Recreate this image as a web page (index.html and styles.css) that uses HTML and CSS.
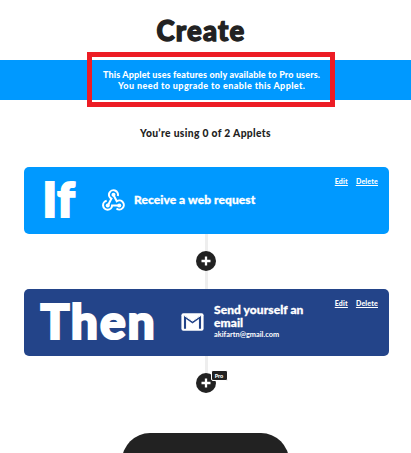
FILE: index.html
```html
<!DOCTYPE html>
<html lang="en">
<head>
<meta charset="utf-8">
<title>Create</title>
<link rel="stylesheet" href="styles.css">
</head>
<body>
<main class="page">
  <h1 class="title">Create</h1>
  <section class="banner">
    <p class="banner-one">This Applet uses features only available to Pro users.</p>
    <p class="banner-two">You need to upgrade to enable this Applet.</p>
    <div class="highlight"></div>
  </section>
  <p class="usage">You’re using 0 of 2 Applets</p>
  <section class="card card-if">
    <div class="word word-if">If</div>
    <svg class="hook" viewBox="0 0 24 24" fill="none" stroke="#fff" stroke-width="2.1">
      <path d="M16.5 7.2A4.7 4.7 0 1 0 9.8 10.1L6.4 16.7"/>
      <path d="M4.9 12.3A4.7 4.7 0 1 0 10.5 17.3H17.6"/>
      <path d="M15.1 20.3A4.7 4.7 0 1 0 15.4 12.8L12 6.2"/>
      <g fill="#fff" stroke="none"><circle cx="12" cy="6.1" r="2.1"/><circle cx="6" cy="17.2" r="2.1"/><circle cx="18" cy="17.2" r="2.1"/></g>
    </svg>
    <div class="label label-if">Receive a web request</div>
    <nav class="links"><a class="edit">Edit</a><a class="delete">Delete</a></nav>
  </section>
  <div class="connector"><span class="plus"><svg viewBox="0 0 20 20"><path d="M10 5.5V14.5M5.5 10H14.5"/></svg></span></div>
  <section class="card card-then">
    <div class="word word-then">Then</div>
    <svg class="mail" viewBox="0 0 23 18">
      <rect x="0.4" y="0.2" width="22.2" height="17.6" rx="2" fill="#fff"/>
      <path d="M4 15.7V4L11.5 9.3L19 4V15.7" fill="none" stroke="#234489" stroke-width="2.1"/>
      <path d="M3 2.4L11.5 8.1L20 2.4" fill="none" stroke="#fff" stroke-width="1"/>
    </svg>
    <div class="label label-then"><div class="send">Send yourself an</div><div class="email">email</div><div class="address">akifartn@gmail.com</div></div>
    <nav class="links"><a class="edit">Edit</a><a class="delete">Delete</a></nav>
  </section>
  <div class="connector last"><span class="plus"><svg viewBox="0 0 20 20"><path d="M10 5.5V14.5M5.5 10H14.5"/></svg><span class="pro">Pro</span></span></div>
  <div class="button"></div>
</main>
</body>
</html>
```
FILE: styles.css
```css
* { box-sizing: border-box; }
body { margin: 0; background: #fff; color: #222; font-family: Lato, "Liberation Sans", sans-serif; font-weight: 900; }
h1, p { margin: 0; }
.page { height: 453px; overflow: hidden; display: flex; flex-direction: column; white-space: nowrap; }
.page > * { flex: none; }
.title { height: 60px; padding: 14px 0 0 156.5px; font-size: 27.5px; line-height: 34px; font-weight: 900; letter-spacing: 1.2px; -webkit-text-stroke: 1.3px #222; }
.banner { position: relative; height: 40px; padding-top: 8.5px; background: #0099ff; color: #fff; font-size: 9px; line-height: 11px; }
.banner-one { padding-left: 103px; letter-spacing: 0.13px; }
.banner-two { padding-left: 118px; letter-spacing: 0.4px; }
.highlight { position: absolute; left: 87px; top: -8px; width: 248px; height: 55px; border: 5px solid #ed1c24; }
.usage { height: 66.5px; padding: 26px 0 0 140px; font-size: 10.3px; line-height: 14px; letter-spacing: 0.33px; }
.card { height: 67px; margin: 0 22.5px 0 23.5px; border-radius: 5px; display: flex; color: #fff; }
.card-if { background: #0099ff; }
.card-then { background: #234489; }
.word { flex: none; font-size: 48px; line-height: 58px; padding-top: 3px; -webkit-text-stroke: 2.2px #fff; }
.word-if { width: 78.5px; padding-left: 19px; letter-spacing: 1px; }
.word-then { width: 157px; padding-left: 17px; letter-spacing: 1.8px; }
.hook { width: 23px; height: 23px; margin-top: 22px; flex: none; }
.mail { width: 23px; height: 18px; margin-top: 24px; flex: none; }
.label { flex: none; font-size: 12px; line-height: 12.5px; letter-spacing: 0.07px; -webkit-text-stroke: 0.3px #fff; }
.label-if { width: 180px; padding: 27px 0 0 9px; }
.label-then { width: 115px; padding: 15.5px 0 0 10.5px; }
.address { font-size: 7.4px; line-height: 12px; font-weight: 700; letter-spacing: 0; -webkit-text-stroke: 0; }
.links { display: flex; gap: 8px; margin: 10px 0 0 auto; padding-right: 10.5px; font-size: 7px; line-height: 8px; letter-spacing: 0.2px; }
.links a { text-decoration: underline; }
.connector { height: 55px; display: flex; align-items: center; justify-content: center; background: linear-gradient(#eee, #eee) 204.5px 0 / 3px 100% no-repeat; }
.plus { position: relative; width: 20px; height: 20px; border-radius: 50%; background: #222; margin-left: 1px; }
.plus svg { display: block; width: 20px; height: 20px; fill: none; stroke: #fff; stroke-width: 2.3; }
.last { height: 77.5px; align-items: flex-start; padding-top: 17.5px; background-size: 3px 20px; }
.pro { position: absolute; left: 14.5px; top: -3.5px; width: 17px; height: 11px; border: 0.5px solid #fff; border-radius: 2px; background: #222; color: #fff; font-size: 5.5px; line-height: 10px; text-align: center; }
.button { width: 167px; height: 56px; margin-left: 122px; border-radius: 28px; background: #222; }
```
